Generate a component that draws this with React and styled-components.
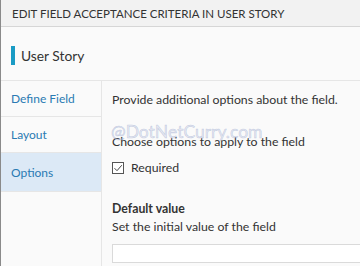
import { createGlobalStyle, styled } from "styled-components";

const Global = createGlobalStyle`
  html, body {
    margin: 0;
    padding: 0;
    background: #fafafa;
  }
  body {
    font-family: Lato, "Noto Sans", sans-serif;
    color: #333;
  }
`;

const menu = [
  { label: "Define Field" },
  { label: "Layout" },
  { label: "Options", active: true },
];

export default function App() {
  return (
    <>
      <Global />
      <Dialog>
        <Header>EDIT FIELD ACCEPTANCE CRITERIA IN USER STORY</Header>
        <Title>User Story</Title>
        <Body>
          <Sidebar>
            {menu.map((m) => (
              <MenuItem key={m.label} $active={m.active}>
                {m.label}
              </MenuItem>
            ))}
          </Sidebar>
          <Content>
            <Text>Provide additional options about the field.</Text>
            <Watermark>@DotNetCurry.com</Watermark>
            <Text $top={24}>Choose options to apply to the field</Text>
            <Check>
              <Box>
                <svg width="10" height="10" viewBox="0 0 10 10">
                  <path d="M1.5 5.2 L4 7.7 L8.8 2.2" fill="none" stroke="#444" strokeWidth="1" />
                </svg>
              </Box>
              Required
            </Check>
            <Label>Default value</Label>
            <Text>Set the initial value of the field</Text>
            <Input />
          </Content>
        </Body>
      </Dialog>
    </>
  );
}

const Dialog = styled.div`
  width: 360px;
  height: 266px;
  overflow: hidden;
  display: flex;
  flex-direction: column;
  border-left: 1px solid #8a8a8a;
  box-sizing: border-box;
`;

const Header = styled.div`
  height: 27px;
  box-sizing: border-box;
  flex-shrink: 0;
  background: #f2f2f2;
  border-bottom: 1px solid #d6d6d6;
  margin-left: -1px;
  padding-left: 12px;
  display: flex;
  align-items: center;
  font-size: 11.5px;
  color: #333;
`;

const Title = styled.div`
  height: 54px;
  box-sizing: border-box;
  flex-shrink: 0;
  display: flex;
  align-items: center;
  padding-left: 10px;
  padding-top: 4px;
  font-size: 13.8px;
  color: #333;
  border-bottom: 1px solid #e6e6e6;
  &::before {
    content: "";
    width: 4px;
    height: 19px;
    background: #1a9bc4;
    margin-right: 6px;
  }
`;

const Body = styled.div`
  flex: 1;
  display: flex;
  min-height: 0;
`;

const Sidebar = styled.div`
  width: 100px;
  flex-shrink: 0;
  border-right: 1px solid #e6e6e6;
  background: #fafafa;
`;

const MenuItem = styled.div`
  height: ${(p) => (p.$active ? 38 : 35)}px;
  border-bottom: 1px solid #e6e6e6;
  display: flex;
  align-items: center;
  padding-left: 10px;
  font-size: 12px;
  color: #2a7ab3;
  background: ${(p) => (p.$active ? "#dce9f6" : "transparent")};
`;

const Content = styled.div`
  flex: 1;
  position: relative;
  padding: 10px 0 0 10px;
  display: flex;
  flex-direction: column;
  align-items: flex-start;
`;

const Text = styled.div`
  font-size: 12.3px;
  line-height: 18px;
  margin-top: ${(p) => p.$top || 0}px;
  white-space: nowrap;
`;

const Watermark = styled.div`
  position: absolute;
  left: 9px;
  top: 41px;
  font-size: 17.5px;
  line-height: 20px;
  color: rgba(205, 212, 232, 0.45);
  -webkit-text-stroke: 0.5px rgba(150, 165, 205, 0.55);
  pointer-events: none;
`;

const Check = styled.label`
  margin-top: 8px;
  display: flex;
  align-items: center;
  gap: 7px;
  font-size: 12.3px;
  line-height: 18px;
`;

const Box = styled.span`
  width: 12px;
  height: 12px;
  box-sizing: border-box;
  border: 1px solid #555;
  background: #fff;
  display: flex;
  align-items: center;
  justify-content: center;
`;

const Label = styled.div`
  margin-top: 23px;
  font-size: 12.3px;
  font-weight: bold;
  line-height: 18px;
`;

const Input = styled.div`
  margin-top: 8px;
  width: 260px;
  height: 19px;
  box-sizing: border-box;
  border: 1px solid #dadada;
  border-right: none;
  background: #fff;
`;
